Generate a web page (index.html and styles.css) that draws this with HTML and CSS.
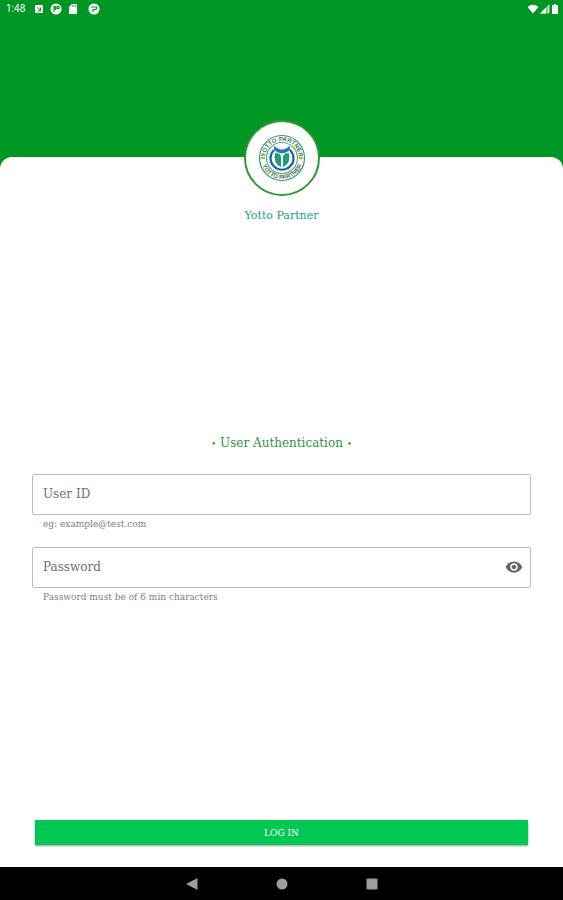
FILE: index.html
```html
<!DOCTYPE html>
<html lang="en">
<head>
    <meta charset="UTF-8">
    <meta name="viewport" content="width=device-width, initial-scale=1">
    <title>Yotto Partner</title>
    <link rel="stylesheet" href="styles.css">
</head>
<body>
    <header class="top">
        <div class="status">
            <span class="time">1:48</span>
            <svg width="10" height="10" viewBox="0 0 10 10"><rect x="1" y="1" width="8" height="8" rx="1" fill="#fff"/><path d="M3.500 3l3 4M6.500 3.500v3.500H3.500" stroke="#009624" fill="none"/></svg>
            <svg width="12" height="12" viewBox="0 0 12 12"><circle cx="6" cy="6" r="5.500" fill="#fff"/><path d="M4 9V3.500h1.500V7M7 6V3.500h2V5.500H7.500" stroke="#009624" stroke-width="1.200" fill="none"/></svg>
            <svg width="10" height="12" viewBox="0 0 10 12"><path d="M4 1h5v10H1V4z" fill="#fff"/><path d="M4.500 2v2M6 2v2M7.500 2v2" stroke="#009624" stroke-width=".6"/></svg>
            <svg class="last" width="12" height="12" viewBox="0 0 12 12"><circle cx="6" cy="6" r="5.500" fill="#fff"/><path d="M3 4h6M5 9V6.500h3L9 4" stroke="#009624" stroke-width="1.200" fill="none"/></svg>
            <div class="signals">
                <svg width="12" height="10" viewBox="0 0 12 10"><path d="M6 9.500L.5 3Q6-1.500 11.500 3z" fill="#fff"/></svg>
                <svg width="10" height="10" viewBox="0 0 10 10"><path d="M9.500 0v9.500H0z" fill="#fff" opacity=".5"/><path d="M6 3.500v6H0z" fill="#fff"/><path d="M8.500 1v8" stroke="#fff"/></svg>
                <svg width="8" height="10" viewBox="0 0 8 10"><path d="M3 0h2v1h2v9H1V1h2z" fill="#fff"/></svg>
            </div>
        </div>
    </header>
    <main class="card">
        <div class="brand">
            <div class="logo">
                <svg width="48" height="48" viewBox="0 0 48 48">
                    <defs>
                        <path id="arc-top" d="M7 24a17 17 0 0 1 34 0"/>
                        <path id="arc-bottom" d="M3 24a21 21 0 0 0 42 0"/>
                    </defs>
                    <circle cx="24" cy="24" r="22.500" fill="#fff" stroke="#2e9a68" stroke-width="1.200"/>
                    <circle cx="24" cy="24" r="15.500" fill="#fff" stroke="#5cb46c" stroke-width="1.200"/>
                    <text class="seal"><textPath href="#arc-top" startOffset="50%">YOTTO PARTNER</textPath></text>
                    <text class="seal"><textPath href="#arc-bottom" startOffset="50%">YOTTO PARTNER</textPath></text>
                    <path d="M3 24h4M41 24h4" stroke="#a8bd35" stroke-width="2"/>
                    <path d="M16 16a11.500 11.500 0 1 0 16 0" fill="none" stroke="#1767a8" stroke-width="2.200"/>
                    <path d="M16 12l4 2.500q4 2 8 0l4-2.500v4l-4 2.500-4 1-4-1-4-2.500z" fill="#2878b8"/>
                    <path d="M17 19q6 0 6 4v10q-8-3-6-14zM31 19q-6 0-6 4v10q8-3 6-14z" fill="#249b78"/>
                </svg>
            </div>
            <h1>Yotto Partner</h1>
        </div>
        <form class="login">
            <div class="fields">
                <h2><span class="dot">•</span> User Authentication <span class="dot">•</span></h2>
                <div class="field">
                    <input type="text" id="user" autocomplete="username" placeholder=" ">
                    <label for="user">User ID</label>
                </div>
                <p class="hint">eg: example@test.com</p>
                <div class="field">
                    <input type="password" id="pass" autocomplete="current-password" placeholder=" ">
                    <label for="pass">Password</label>
                    <button type="button" class="eye" aria-label="Show password">
                        <svg width="18" height="18" viewBox="0 0 24 24"><path fill="#666" d="M12 4.500C7 4.500 2.730 7.610 1 12c1.730 4.390 6 7.500 11 7.500s9.270-3.110 11-7.500c-1.730-4.390-6-7.500-11-7.500zM12 17c-2.760 0-5-2.240-5-5s2.240-5 5-5 5 2.240 5 5-2.240 5-5 5zm0-8c-1.660 0-3 1.340-3 3s1.340 3 3 3 3-1.340 3-3-1.340-3-3-3z"/></svg>
                    </button>
                </div>
                <p class="hint">Password must be of 6 min characters</p>
            </div>
            <button type="submit" class="submit">LOG IN</button>
        </form>
    </main>
    <nav class="keys">
        <button type="button" aria-label="Back"><svg width="12" height="12" viewBox="0 0 12 12"><path d="M11.500 0v12L0 6z" fill="#9e9e9e"/></svg></button>
        <button type="button" aria-label="Home"><svg width="12" height="12" viewBox="0 0 12 12"><circle cx="6" cy="6" r="5.500" fill="#9e9e9e"/></svg></button>
        <button type="button" aria-label="Recent apps"><svg width="12" height="12" viewBox="0 0 12 12"><rect x=".5" y=".5" width="11" height="11" rx="1" fill="#9e9e9e"/></svg></button>
    </nav>

    <script>
        var pass = document.querySelector('#pass')
        document.querySelector('.eye').addEventListener('click', () => {
            pass.type = pass.type == 'password' ? 'text' : 'password'
        })
    </script>
</body>
</html>
```
FILE: styles.css
```css
* {
    box-sizing: border-box;
}
body {
    margin: 0;
    min-height: 100vh;
    display: flex;
    flex-direction: column;
    background-color: #009624;
    font-family: "DejaVu Serif", serif;
}
svg {
    display: block;
}
h1, h2, p {
    margin: 0;
    font-weight: normal;
}
button {
    font-family: inherit;
    border: 0;
    padding: 0;
    cursor: pointer;
}

.top {
    height: 157px;
}
.status {
    display: flex;
    align-items: center;
    gap: 6px;
    height: 18px;
    padding: 0 4px 0 6px;
}
.time {
    color: #fff;
    font: 10px/18px Roboto, sans-serif;
    width: 22px;
}
.last {
    margin-left: 4px;
}
.signals {
    display: flex;
    gap: 1px;
    margin-left: auto;
}

.card {
    flex: 1;
    display: flex;
    flex-direction: column;
    background-color: #fff;
    border-radius: 12px 12px 0 0;
}
.brand {
    display: flex;
    flex-direction: column;
    align-items: center;
    margin-top: -37px;
}
.logo {
    display: flex;
    align-items: center;
    justify-content: center;
    width: 76px;
    height: 76px;
    border: 2px solid #2f9a35;
    border-radius: 50%;
    background-color: #fff;
}
.seal {
    font: bold 6px "Liberation Sans", sans-serif;
    fill: #47705f;
    text-anchor: middle;
}
h1 {
    margin-top: 10px;
    font-size: 11px;
    line-height: 20px;
    color: #17a085;
}

.login {
    flex: 1;
    display: flex;
    flex-direction: column;
    padding: 0 32px 22px;
}
.fields {
    margin: auto 0;
    padding-bottom: 8px;
}
h2 {
    margin-bottom: 20px;
    font-size: 12px;
    line-height: 20px;
    text-align: center;
    color: #2b9640;
}
.dot {
    font-size: 9px;
}
.field {
    position: relative;
}
.field input {
    display: block;
    width: 100%;
    height: 41px;
    padding: 0 40px 0 10px;
    border: 1px solid #bdbdbd;
    border-radius: 2px;
    font: 12px "DejaVu Serif", serif;
    color: #333;
    outline: none;
}
.field input:focus {
    border-color: #009624;
}
.field label {
    position: absolute;
    left: 11px;
    top: 0;
    font-size: 12px;
    line-height: 40px;
    color: #707070;
    pointer-events: none;
}
/* label moves onto the border when the box is in use */
.field input:focus + label,
.field input:not(:placeholder-shown) + label {
    top: -6px;
    font-size: 9px;
    line-height: 12px;
    background-color: #fff;
}
.eye {
    position: absolute;
    right: 8px;
    top: 11px;
    background: none;
}
.hint {
    padding-left: 11px;
    font-size: 9px;
    line-height: 18px;
    color: #808080;
}
.hint + .field {
    margin-top: 14px;
}
.submit {
    height: 25px;
    margin: 0 3px;
    background-color: #00c853;
    box-shadow: 0 1px 2px rgba(0, 0, 0, 0.4);
    color: #fff;
    font-size: 9px;
}

.keys {
    display: flex;
    align-items: center;
    justify-content: center;
    gap: 78px;
    height: 33px;
    background-color: #000;
}
.keys button {
    background: none;
}
```
